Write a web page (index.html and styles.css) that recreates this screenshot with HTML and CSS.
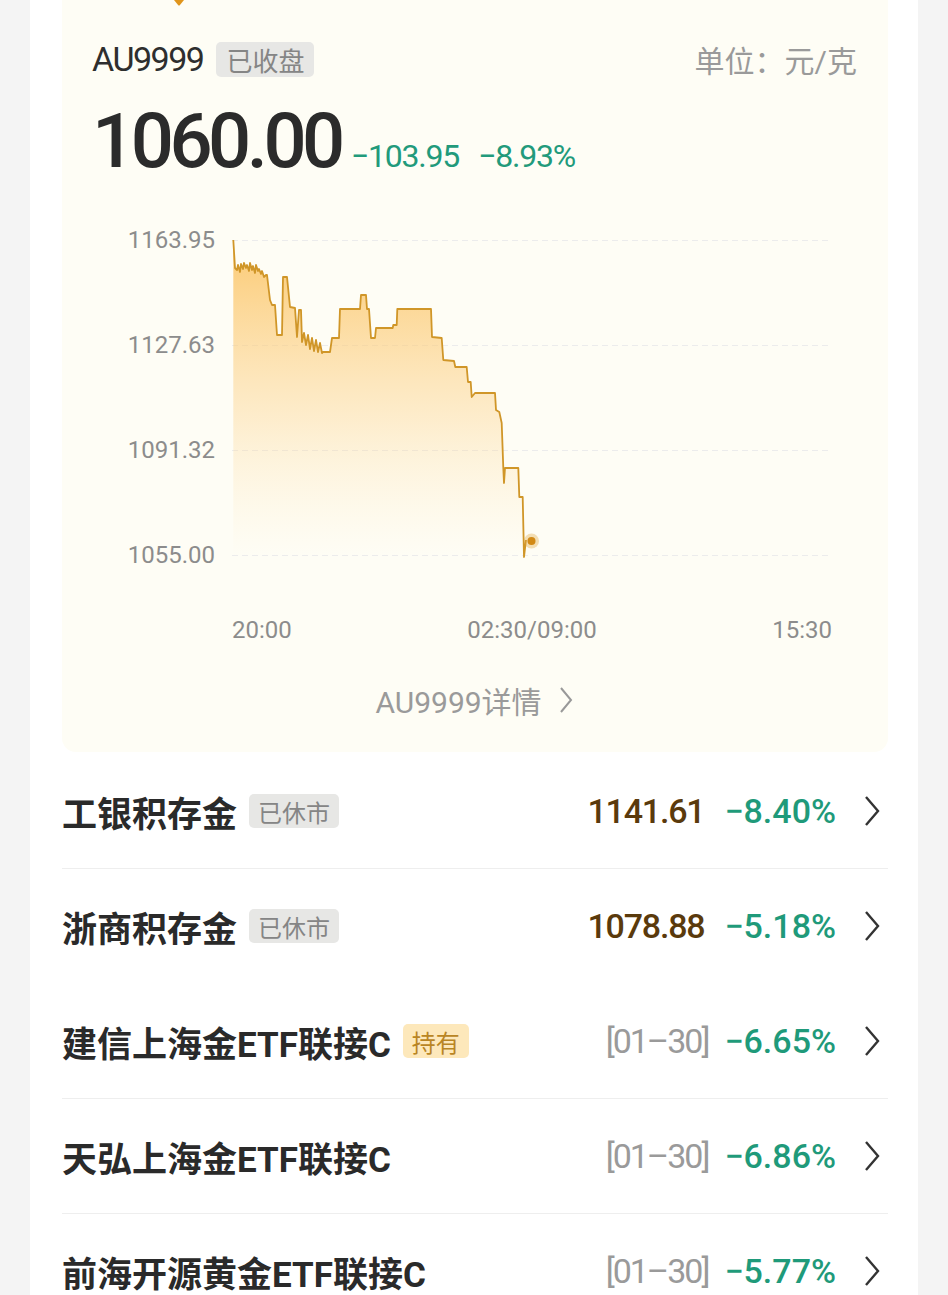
FILE: index.html
```html
<!DOCTYPE html>
<html lang="zh-CN">
<head>
    <meta charset="UTF-8">
    <meta name="viewport" content="width=device-width, initial-scale=1.0">
    <title>AU9999 行情</title>
    <link rel="stylesheet" href="styles.css">
</head>
<body>
    <main class="card">
        <section class="panel">
            <div class="tip">
                <svg width="12" height="6" viewBox="0 0 12 6"><path d="M1 0 H11 L6.5 5.5 H5.5 Z" fill="#e0951c"/></svg>
            </div>

            <div class="quote-head">
                <div class="quote-name">
                    <span class="code">AU9999</span>
                    <span class="badge badge-gray badge-lg">已收盘</span>
                </div>
                <span class="unit">单位：元/克</span>
            </div>

            <div class="quote-price">
                <span class="big">1060.00</span>
                <span class="chg">−103.95</span>
                <span class="chg">−8.93%</span>
            </div>

            <div class="chart">
                <div class="y-axis">
                    <span>1163.95</span>
                    <span>1127.63</span>
                    <span>1091.32</span>
                    <span>1055.00</span>
                </div>
                <svg class="plot" width="600" height="345" viewBox="0 0 600 345">
                    <defs>
                        <linearGradient id="fill" x1="0" y1="0" x2="0" y2="1">
                            <stop offset="0" stop-color="#fbc05a" stop-opacity="0.85"/>
                            <stop offset="0.55" stop-color="#fcd28a" stop-opacity="0.4"/>
                            <stop offset="1" stop-color="#fde6b8" stop-opacity="0"/>
                        </linearGradient>
                    </defs>
                    <g stroke="#ececec" stroke-width="1" stroke-dasharray="6 4">
                        <line x1="0" y1="15.5" x2="600" y2="15.5"/>
                        <line x1="0" y1="120.5" x2="600" y2="120.5"/>
                        <line x1="0" y1="225.5" x2="600" y2="225.5"/>
                        <line x1="0" y1="330.5" x2="600" y2="330.5"/>
                    </g>
                    <path fill="url(#fill)" d="M1.3 15 L3 43 L5 45 L6 40 L8 47 L9 39 L11 44 L12 38 L14 43 L15 40 L17 46 L18 38 L20 45 L21 41 L23 48 L24 40 L26 46 L27 44 L29 49 L30 46 L32 52 L34 50 L35 50 L38 75 L40 80 L43 80 L45 110 L50 110 L51 52 L55 52 L58 82 L63 83 L65 112 L67 85 L69 85 L70 117 L72 108 L74 120 L76 110 L78 124 L80 113 L82 126 L84 115 L86 127 L88 118 L90 128 L91 127 L98 127 L100 113 L107 113 L108 84 L128 84 L129 70 L134 70 L135 84 L137 84 L139 113 L143 113 L144 103 L160.7 103 L161.3 100 L164.7 100 L165.3 84 L199 84 L200 112 L209.7 113 L211.3 135 L222 136 L223.3 142 L234.7 142 L236 157 L238.7 157 L239.7 172 L243 168 L263 168 L264 185 L267.3 187 L269.7 198 L271.3 243 L272 258 L273 243 L286.3 243 L287.3 272 L290.7 272 L292 332 L294 315 L294 330 L1.3 330 Z"/>
                    <path fill="none" stroke="#d09628" stroke-width="1.8" stroke-linejoin="round" d="M1.3 15 L3 43 L5 45 L6 40 L8 47 L9 39 L11 44 L12 38 L14 43 L15 40 L17 46 L18 38 L20 45 L21 41 L23 48 L24 40 L26 46 L27 44 L29 49 L30 46 L32 52 L34 50 L35 50 L38 75 L40 80 L43 80 L45 110 L50 110 L51 52 L55 52 L58 82 L63 83 L65 112 L67 85 L69 85 L70 117 L72 108 L74 120 L76 110 L78 124 L80 113 L82 126 L84 115 L86 127 L88 118 L90 128 L91 127 L98 127 L100 113 L107 113 L108 84 L128 84 L129 70 L134 70 L135 84 L137 84 L139 113 L143 113 L144 103 L160.7 103 L161.3 100 L164.7 100 L165.3 84 L199 84 L200 112 L209.7 113 L211.3 135 L222 136 L223.3 142 L234.7 142 L236 157 L238.7 157 L239.7 172 L243 168 L263 168 L264 185 L267.3 187 L269.7 198 L271.3 243 L272 258 L273 243 L286.3 243 L287.3 272 L290.7 272 L292 332 L294 315"/>
                    <circle cx="299.5" cy="316" r="7.5" fill="#e0a23a" fill-opacity="0.35"/>
                    <circle cx="299.5" cy="316" r="4" fill="#d28a16"/>
                </svg>
            </div>

            <div class="x-axis">
                <span>20:00</span>
                <span>02:30/09:00</span>
                <span>15:30</span>
            </div>

            <div class="detail-link">
                <span>AU9999详情</span>
                <svg width="16" height="28" viewBox="0 0 16 28"><path d="M3 2 L13 14 L3 26" fill="none" stroke="#999" stroke-width="2"/></svg>
            </div>
        </section>

        <ul class="list">
            <li class="row">
                <div class="name">
                    <span class="title">工银积存金</span>
                    <span class="badge badge-gray">已休市</span>
                </div>
                <div class="figures">
                    <span class="price">1141.61</span>
                    <span class="pct">−8.40%</span>
                    <svg class="chev" width="16" height="30" viewBox="0 0 16 30"><path d="M2 1 L14 15 L2 29" fill="none" stroke="#333" stroke-width="2.4"/></svg>
                </div>
            </li>
            <li class="row plain">
                <div class="name">
                    <span class="title">浙商积存金</span>
                    <span class="badge badge-gray">已休市</span>
                </div>
                <div class="figures">
                    <span class="price">1078.88</span>
                    <span class="pct">−5.18%</span>
                    <svg class="chev" width="16" height="30" viewBox="0 0 16 30"><path d="M2 1 L14 15 L2 29" fill="none" stroke="#333" stroke-width="2.4"/></svg>
                </div>
            </li>
            <li class="row">
                <div class="name">
                    <span class="title">建信上海金ETF联接C</span>
                    <span class="badge badge-gold">持有</span>
                </div>
                <div class="figures">
                    <span class="date">[01–30]</span>
                    <span class="pct">−6.65%</span>
                    <svg class="chev" width="16" height="30" viewBox="0 0 16 30"><path d="M2 1 L14 15 L2 29" fill="none" stroke="#333" stroke-width="2.4"/></svg>
                </div>
            </li>
            <li class="row">
                <div class="name">
                    <span class="title">天弘上海金ETF联接C</span>
                </div>
                <div class="figures">
                    <span class="date">[01–30]</span>
                    <span class="pct">−6.86%</span>
                    <svg class="chev" width="16" height="30" viewBox="0 0 16 30"><path d="M2 1 L14 15 L2 29" fill="none" stroke="#333" stroke-width="2.4"/></svg>
                </div>
            </li>
            <li class="row">
                <div class="name">
                    <span class="title">前海开源黄金ETF联接C</span>
                </div>
                <div class="figures">
                    <span class="date">[01–30]</span>
                    <span class="pct">−5.77%</span>
                    <svg class="chev" width="16" height="30" viewBox="0 0 16 30"><path d="M2 1 L14 15 L2 29" fill="none" stroke="#333" stroke-width="2.4"/></svg>
                </div>
            </li>
        </ul>
    </main>
</body>
</html>
```

FILE: styles.css
```css
body {
    margin: 0;
    background-color: #f4f4f4;
    font-family: Roboto, "Noto Sans CJK SC", sans-serif;
    color: #333;
}

.card {
    margin: 0 30px;
    padding: 0 30px 0 32px;
    background-color: #fff;
    min-height: 1295px;
}

/* quote panel */
.panel {
    background-color: #fefdf5;
    border-radius: 0 0 14px 14px;
    padding: 0 31px 34px 30px;
}

.tip {
    height: 6px;
    margin-left: 81px;
    line-height: 0;
}

.quote-head {
    margin-top: 34px;
    height: 38px;
    display: flex;
    justify-content: space-between;
    align-items: center;
}

.quote-name {
    display: flex;
    align-items: center;
    gap: 13px;
}

.code {
    font-size: 34px;
    line-height: 38px;
    letter-spacing: -1.5px;
    color: #2e2e2e;
}

.unit {
    font-size: 30px;
    color: #9a9a9a;
}

.badge {
    display: inline-flex;
    align-items: center;
    height: 34px;
    padding: 0 9px;
    border-radius: 5px;
    font-size: 24px;
}

.badge-lg {
    height: 35px;
    padding: 0 10px;
    font-size: 26px;
}

.badge-gray {
    background-color: #e7e7e5;
    color: #858585;
}

.badge-gold {
    background-color: #fde8bb;
    color: #b98524;
}

.quote-price {
    margin-top: 23px;
    height: 80px;
    display: flex;
    align-items: baseline;
    gap: 10px;
}

.big {
    font-size: 76px;
    line-height: 80px;
    font-weight: 500;
    letter-spacing: -4.5px;
    color: #2b2b2b;
}

.chg {
    font-size: 32px;
    letter-spacing: -1.2px;
    color: #229a7b;
    margin-right: 9px;
}

/* chart */
.chart {
    margin-top: 44px;
    display: flex;
    gap: 17px;
}

.y-axis {
    width: 123px;
    height: 345px;
    display: flex;
    flex-direction: column;
    justify-content: space-between;
    align-items: flex-end;
}

.y-axis span {
    font-size: 24px;
    line-height: 30px;
    color: #8c8c8c;
}

.plot {
    display: block;
}

.x-axis {
    margin: 45px 0 0 140px;
    width: 600px;
    display: flex;
    justify-content: space-between;
    font-size: 24px;
    line-height: 30px;
    color: #8c8c8c;
}

.detail-link {
    margin-top: 37px;
    height: 36px;
    display: flex;
    justify-content: center;
    align-items: center;
    gap: 16px;
    font-size: 30px;
    color: #9a9a9a;
}

/* fund list */
.list {
    list-style: none;
    margin: 0;
    padding: 2px 0 0;
}

.row {
    box-sizing: border-box;
    height: 115px;
    display: flex;
    justify-content: space-between;
    align-items: center;
    border-bottom: 1px solid #eeeeee;
}

.row.plain {
    border-bottom-color: transparent;
}

.name {
    display: flex;
    align-items: center;
    gap: 12px;
}

.title {
    font-size: 35px;
    font-weight: 700;
    color: #2a2a2a;
}

.figures {
    display: flex;
    align-items: center;
    padding-right: 8px;
}

.price {
    font-size: 34px;
    font-weight: 500;
    letter-spacing: -1.2px;
    color: #5a3a0c;
    margin-right: 20px;
}

.date {
    font-size: 34px;
    letter-spacing: -2px;
    color: #9a9a9a;
    margin-right: 16px;
}

.pct {
    font-size: 34px;
    font-weight: 500;
    color: #1f9a7a;
    margin-right: 28px;
}

.chev {
    display: block;
}
```
